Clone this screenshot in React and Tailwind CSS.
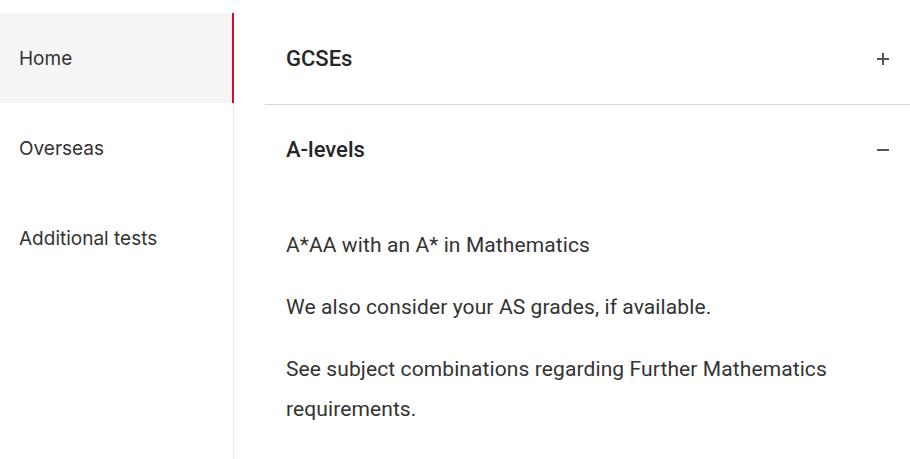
export default function App() {
  const items = ['Home', 'Overseas', 'Additional tests'];
  return (
    <div className="min-h-screen bg-white pt-[13px] flex text-[#333]" style={{ fontFamily: 'Roboto, sans-serif' }}>
      {/* Sidebar */}
      <nav className="w-[234px] shrink-0 border-r border-[#e8e8e8] min-h-[446px]">
        {items.map((item, i) => (
          <div
            key={item}
            className={
              i === 0
                ? 'h-[90px] flex items-center pl-[19px] pt-[2px] bg-[#f5f5f7] border-r-2 border-[#d50c2f] -mr-px text-[19px] text-[#333]'
                : 'h-[90px] flex items-center pl-[19px] pt-[2px] text-[19px] text-[#333]'
            }
            style={{ fontFamily: 'Inter, sans-serif' }}
          >
            {item}
          </div>
        ))}
      </nav>

      {/* Accordion */}
      <div className="flex-1 ml-[31px]">
        <div className="h-[92px] flex items-center justify-between pl-[21px] pr-[21px] border-b border-[#d9d9d9]">
          <h3 className="text-[22px] font-medium text-[#262626] leading-none">GCSEs</h3>
          <span className="relative block w-[12px] h-[12px]">
            <span className="absolute left-0 top-[5px] w-[12px] h-[2px] bg-[#555]"></span>
            <span className="absolute left-[5px] top-0 w-[2px] h-[12px] bg-[#555]"></span>
          </span>
        </div>
        <div>
          <div className="h-[90px] flex items-center justify-between pl-[21px] pr-[21px]">
            <h3 className="text-[22px] font-medium text-[#262626] leading-none">A-levels</h3>
            <span className="block w-[12px] h-[2px] bg-[#555]"></span>
          </div>
          <div className="pl-[21px] pr-[40px] pt-[30px] text-[21px] tracking-[0.1px] leading-[40px] text-[#333]">
            <p className="mb-[22px]">A*AA with an A* in Mathematics</p>
            <p className="mb-[22px]">We also consider your AS grades, if available.</p>
            <p>See subject combinations regarding Further Mathematics requirements.</p>
          </div>
        </div>
      </div>
    </div>
  );
}
